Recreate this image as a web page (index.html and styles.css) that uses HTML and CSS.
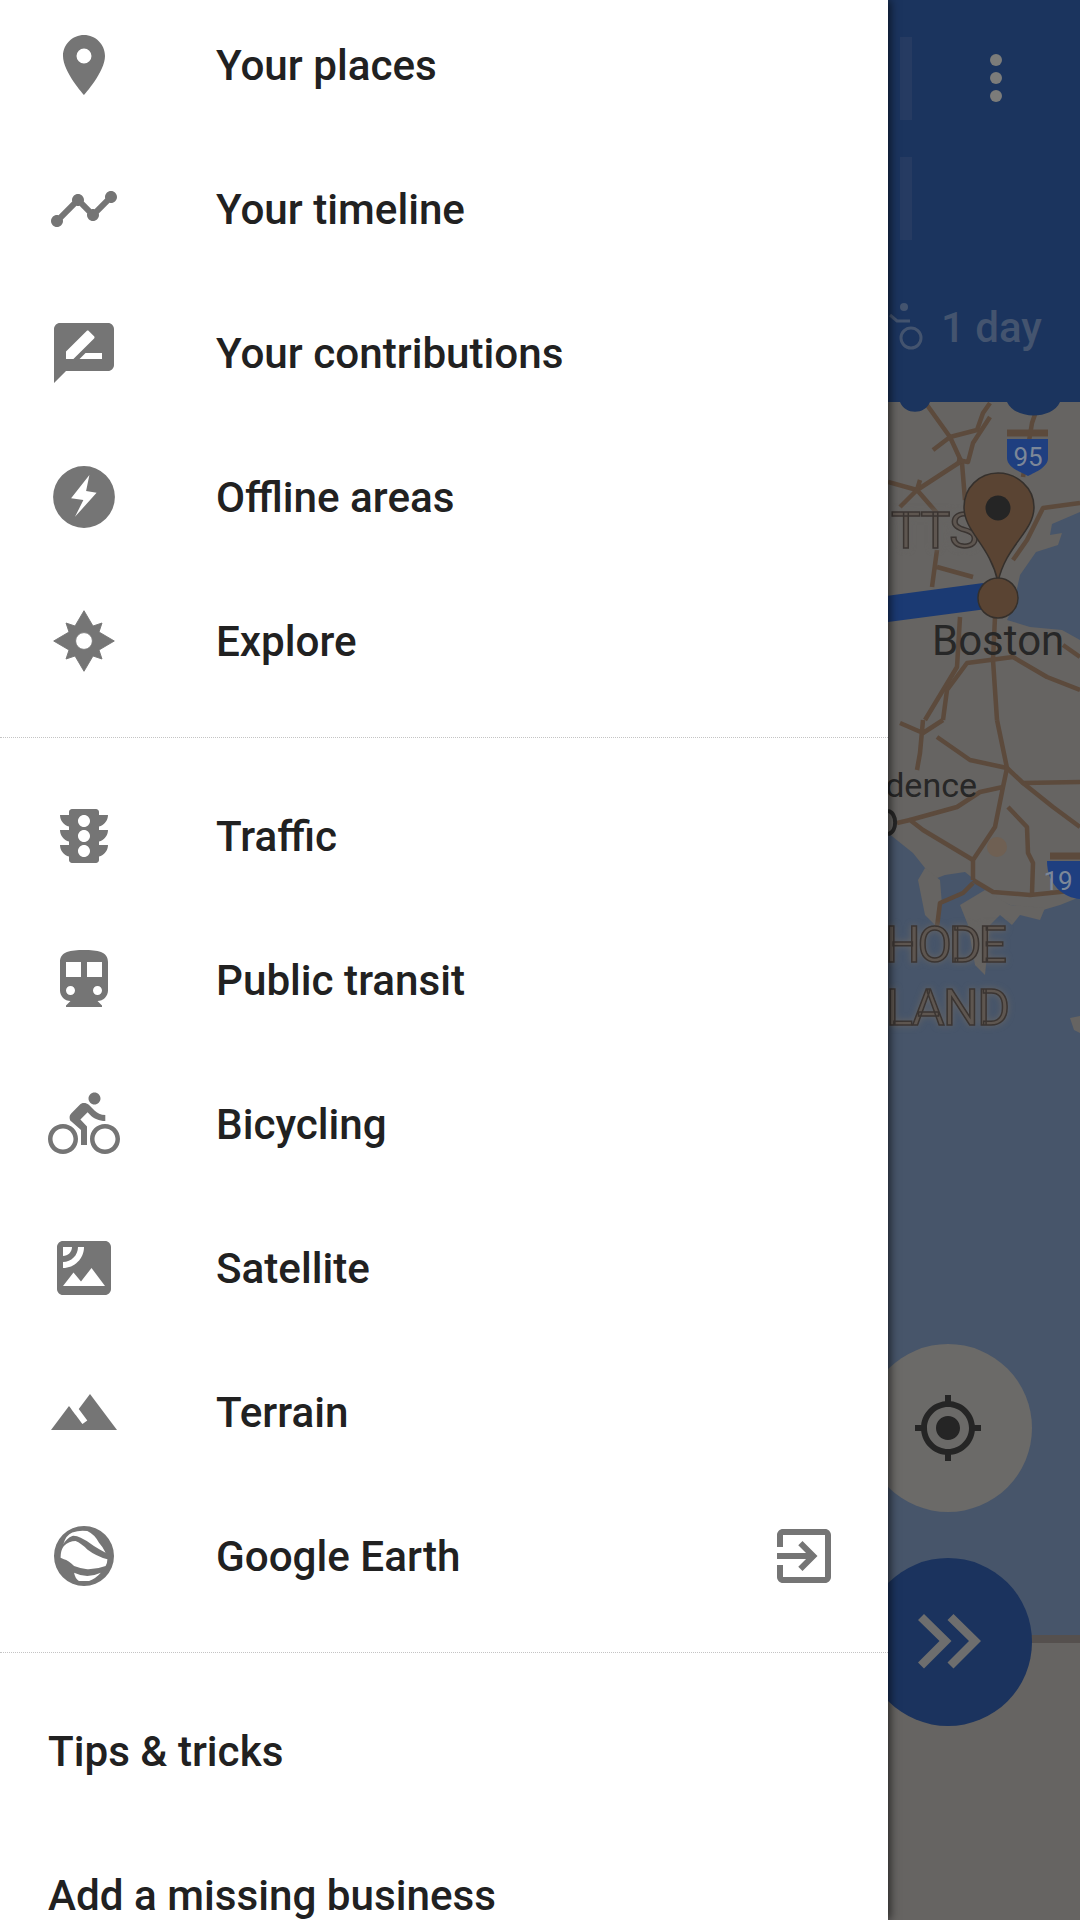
FILE: index.html
```html
<!DOCTYPE html>
<html>
  <head>
    <meta charset="utf-8" />
    <title>Maps menu</title>

    <link rel="stylesheet" href="styles.css">
  </head>

  <body>
    <div class="screen">
      <!-- the dimmed map behind the drawer -->
      <svg class="map" viewBox="888 0 192 1920" width="192" height="1920">
        <rect class="land" x="888" y="400" width="192" height="1250" />

        <path class="water" d="M1080 512L1052 524 1050 535 1062 533 1058 545 1036 552 1020 575 1013 607 1007 620 1030 627 1062 630 1080 640Z" />
        <path class="water" d="M888 833L913 853 925 868 932 880 945 875 965 872 975 880 993 897 1010 905 1043 910 1060 905 1080 897V1660H888Z" />
        <path class="land" d="M1070 1018L1080 1016V1033L1074 1030Z" />
        <path class="land" d="M925 868L940 880 942 905 935 925 925 915 918 880ZM960 905L985 890 1010 905 1045 908 1040 920 1020 915 1012 925 1000 915 990 925 985 975 975 965 968 925Z" />
        <circle class="park" cx="997" cy="847" r="10" />

        <g class="roads">
          <path d="M927 405L950 437 962 463 965 500" />
          <path d="M990 403L983 413 977 430 950 437 933 450" />
          <path d="M990 417L973 443 968 462 957 460" />
          <path d="M888 482L917 490 960 462" />
          <path d="M917 490L900 507M920 480L917 490 937 513" />
          <path d="M1040 400L1032 423 1023 477" />
          <path d="M1080 503L1043 508 1027 540 1013 560" />
          <path d="M937 550L932 587M937 567L973 577" />
          <path d="M960 617L957 667 925 720" />
          <path d="M995 617L993 660 997 720" />
          <path d="M943 720L947 690 967 663 1013 657 1047 677 1080 690" />
          <path d="M1063 645L1080 657" />
          <path d="M923 720L920 753 917 770M900 723L923 733 943 720" />
          <path d="M937 737L970 760 1007 768 1023 783 1080 782" />
          <path d="M997 720L1007 768 1003 787 995 827 973 860 973 880" />
          <path d="M1008 807L1027 827 1028 853 1033 863 1032 893" />
          <path d="M1023 783L1053 807 1080 827" />
          <path d="M910 820L957 807 980 792 1003 787" />
          <path d="M897 823L910 820 923 830 973 860" />
          <path d="M973 880L993 892 1030 895 1080 890" />
          <path d="M973 883L963 893 940 903 937 927" />
        </g>
        <path class="route" d="M880 610L985 596" />

        <path class="shield-top" d="M1007 433H1048" />
        <path class="shield" d="M1007 439H1048V458C1048 467 1036 472 1028 476 1020 472 1007 467 1007 458Z" />
        <text class="shield-num" x="1028" y="466">95</text>
        <path class="shield-top" d="M1050 856H1080" />
        <path class="shield" d="M1047 861H1080V899C1064 898 1047 885 1047 861Z" />
        <text class="shield-num" x="1058" y="890">19</text>

        <text class="state" x="891" y="548" textLength="88">TTS</text>
        <text class="state" x="885" y="962" textLength="122">HODE</text>
        <text class="state" x="886" y="1025" textLength="124">LAND</text>

        <path class="pin" d="M998 473C979 473 964 488 964 507 964 532 990 545 998 582 1006 545 1034 532 1034 507 1034 488 1017 473 998 473Z" />
        <circle class="pin" cx="998" cy="598" r="20" />
        <circle class="pin-dot" cx="998" cy="508" r="12.5" />

        <text class="city" x="932" y="655">Boston</text>
        <text class="town" x="977" y="797" text-anchor="end">dence</text>
        <path class="town-arc" d="M888 811C897 812 898 832 888 834" />

        <!-- app bar -->
        <path class="bar" d="M888 0H1080V402H888Z" />
        <path class="bar" d="M900 402H930C925 415 905 415 900 402ZM1007 402H1060C1052 420 1015 420 1007 402Z" />
        <rect class="bar-ghost" x="900" y="37" width="12" height="83" />
        <rect class="bar-ghost" x="900" y="157" width="12" height="83" />
        <circle class="bar-dot" cx="996" cy="60" r="6" />
        <circle class="bar-dot" cx="996" cy="78" r="6" />
        <circle class="bar-dot" cx="996" cy="96" r="6" />
        <g class="bar-bike">
          <circle class="bar-bike-head" cx="904" cy="307" r="4" />
          <path d="M890 315L897 321H910" />
          <circle cx="911" cy="338" r="10" />
        </g>
        <text class="bar-label" x="941" y="342">1 day</text>

        <rect class="land" x="888" y="1643" width="192" height="277" />
        <path class="shore" d="M1030 1639H1080" />

        <circle class="fab-light" cx="948" cy="1428" r="84" />
        <path class="fab-glyph" transform="translate(912 1392) scale(3)" d="M12 8c-2.21 0-4 1.79-4 4s1.79 4 4 4 4-1.79 4-4-1.79-4-4-4zm8.94 3c-.46-4.17-3.77-7.48-7.94-7.94V1h-2v2.06C6.83 3.52 3.52 6.83 3.06 11H1v2h2.06c.46 4.17 3.77 7.48 7.94 7.94V23h2v-2.06c4.17-.46 7.48-3.77 7.94-7.94H23v-2h-2.06zM12 19c-3.87 0-7-3.13-7-7s3.13-7 7-7 7 3.13 7 7-3.13 7-7 7z" />
        <circle class="fab-dark" cx="948" cy="1642" r="84" />
        <path class="fab-chevrons" d="M918 1620L924 1614 951.500 1641 924 1668.500 918 1662.500 939.500 1641ZM947.500 1620L953.500 1614 981 1641 953.500 1668.500 947.500 1662.500 969 1641Z" />
      </svg>

      <nav class="drawer">
        <div class="group group--first">
          <a class="row">
            <svg class="icon" viewBox="0 0 24 24"><path d="M12 2C8.130 2 5 5.130 5 9c0 5.250 7 13 7 13s7-7.750 7-13c0-3.870-3.130-7-7-7zm0 9.500a2.500 2.500 0 0 1 0-5 2.500 2.500 0 0 1 0 5z" /></svg>
            <span>Your places</span>
          </a>
          <a class="row">
            <svg class="icon" viewBox="0 0 24 24"><path d="M23 8c0 1.100-.9 2-2 2-.18 0-.35-.02-.51-.07l-3.560 3.550c.05.16.07.34.07.52 0 1.100-.9 2-2 2s-2-.9-2-2c0-.18.02-.36.07-.52l-2.550-2.550c-.16.05-.34.07-.52.07s-.36-.02-.52-.07l-4.550 4.560c.05.16.07.33.07.51 0 1.100-.9 2-2 2s-2-.9-2-2 .9-2 2-2c.18 0 .35.02.51.07l4.560-4.550C8.020 9.360 8 9.180 8 9c0-1.100.9-2 2-2s2 .9 2 2c0 .18-.02.36-.07.52l2.550 2.550c.16-.05.34-.07.52-.07s.36.02.52.07l3.550-3.560C19.020 8.350 19 8.180 19 8c0-1.100.9-2 2-2s2 .9 2 2z" /></svg>
            <span>Your timeline</span>
          </a>
          <a class="row">
            <svg class="icon" viewBox="0 0 24 24"><path fill-rule="evenodd" d="M20 2H4c-1.100 0-2 .9-2 2v18l4-4h14c1.100 0 2-.9 2-2V4c0-1.100-.9-2-2-2zM6 14v-2.470l6.880-6.880c.2-.2.51-.2.71 0l1.770 1.770c.2.2.2.51 0 .71L8.470 14H6zm12 0h-7.500l2-2H18v2z" /></svg>
            <span>Your contributions</span>
          </a>
          <a class="row">
            <svg class="icon" viewBox="0 0 24 24"><path fill-rule="evenodd" d="M12 1.700a10.300 10.300 0 1 0 0 20.600 10.300 10.300 0 0 0 0-20.600zM13.800 4.700L7.700 12.400 11.800 13 9 18.600 16.200 10.600 12.700 10z" /></svg>
            <span>Offline areas</span>
          </a>
          <a class="row">
            <svg class="icon" viewBox="0 0 24 24"><path class="icon-star" fill-rule="evenodd" d="M12 1.900L9 7 6 6 7 9 1.900 12 7 15 6 18 9 17 12 22.100 15 17 18 18 17 15 22.100 12 17 9 18 6 15 7ZM12 9.200a2.800 2.800 0 1 0 0 5.600 2.800 2.800 0 0 0 0-5.600z" /></svg>
            <span>Explore</span>
          </a>
        </div>

        <div class="group">
          <a class="row">
            <svg class="icon" viewBox="0 0 24 24"><path d="M20 10h-3V8.860c1.720-.45 3-2 3-3.860h-3V4c0-.55-.45-1-1-1H8c-.55 0-1 .45-1 1v1H4c0 1.860 1.280 3.410 3 3.860V10H4c0 1.860 1.280 3.410 3 3.860V15H4c0 1.860 1.280 3.410 3 3.860V20c0 .55.45 1 1 1h8c.55 0 1-.45 1-1v-1.140c1.720-.45 3-2 3-3.860h-3v-1.140c1.720-.45 3-2 3-3.860zm-8 9c-1.110 0-2-.9-2-2s.89-2 2-2c1.100 0 2 .9 2 2s-.89 2-2 2zm0-5c-1.110 0-2-.9-2-2s.89-2 2-2c1.100 0 2 .9 2 2s-.89 2-2 2zm0-5c-1.110 0-2-.9-2-2 0-1.110.89-2 2-2 1.100 0 2 .89 2 2 0 1.100-.89 2-2 2z" /></svg>
            <span>Traffic</span>
          </a>
          <a class="row">
            <svg class="icon" viewBox="0 0 24 24"><path d="M12 2c-4.420 0-8 .5-8 4v9.500C4 17.430 5.570 19 7.500 19L6 20.500v.5h12v-.5L16.500 19c1.930 0 3.500-1.570 3.500-3.500V6c0-3.500-3.580-4-8-4zM7.500 17c-.83 0-1.500-.67-1.500-1.500S6.670 14 7.500 14s1.500.67 1.500 1.500S8.330 17 7.500 17zm3.500-6H6V6h5v5zm5.500 6c-.83 0-1.500-.67-1.500-1.500s.67-1.500 1.500-1.500 1.500.67 1.500 1.500-.67 1.500-1.500 1.500zm1.500-6h-5V6h5v5z" /></svg>
            <span>Public transit</span>
          </a>
          <a class="row">
            <svg class="icon" viewBox="0 0 24 24"><path d="M15.500 5.500c1.100 0 2-.9 2-2s-.9-2-2-2-2 .9-2 2 .9 2 2 2zM5 12c-2.800 0-5 2.200-5 5s2.200 5 5 5 5-2.200 5-5-2.200-5-5-5zm0 8.500c-1.900 0-3.500-1.600-3.500-3.500s1.600-3.500 3.500-3.500 3.500 1.600 3.500 3.500-1.600 3.500-3.500 3.500zm5.800-10l2.400-2.400.8.8c1.300 1.300 3 2.100 5.100 2.100V9c-1.500 0-2.700-.6-3.600-1.500l-1.900-1.900c-.5-.4-1-.6-1.600-.6s-1.100.2-1.400.6L7.800 8.400c-.4.4-.6.9-.6 1.400 0 .6.2 1.100.6 1.400L11 14v5h2v-6.200l-2.200-2.300zM19 12c-2.800 0-5 2.200-5 5s2.200 5 5 5 5-2.200 5-5-2.200-5-5-5zm0 8.500c-1.900 0-3.500-1.600-3.500-3.500s1.600-3.500 3.500-3.500 3.500 1.600 3.500 3.500-1.600 3.500-3.500 3.500z" /></svg>
            <span>Bicycling</span>
          </a>
          <a class="row">
            <svg class="icon" viewBox="0 0 24 24"><path d="M19 3H5c-1.100 0-2 .9-2 2v14c0 1.100.9 2 2 2h14c1.100 0 2-.9 2-2V5c0-1.100-.9-2-2-2zM5 4.990h3C8 6.650 6.650 8 5 8V4.990zM5 12v-2c2.760 0 5-2.250 5-5.010h2C12 8.860 8.870 12 5 12zm0 6l3.500-4.500 2.500 3.010L14.500 12l4.500 6H5z" /></svg>
            <span>Satellite</span>
          </a>
          <a class="row">
            <svg class="icon" viewBox="0 0 24 24"><path d="M14 6l-3.750 5 2.850 3.800-1.600 1.200C9.810 13.750 7 10 7 10l-6 8h22L14 6z" /></svg>
            <span>Terrain</span>
          </a>
          <a class="row">
            <svg class="icon" viewBox="0 0 24 24"><path fill-rule="evenodd" d="M12 2a10 10 0 1 0 0 20 10 10 0 0 0 0-20zM5.100 8.100Q6 5 8.100 4.200 10.500 3.300 13.100 3.700 15.500 4.800 17 7.600 18.300 9 19.200 10.900 17 9.800 15.300 8.700 13 6.800 10.900 5.900 9.500 5.200 8.100 5.300 6.200 6 5.100 8.100zM4.200 12.600Q4.200 10 5.300 8.700 7 7 9.200 7 11 7.700 13.100 9.800 16 12 19.800 13.100 19.800 14.300 19.200 15.300 16 16.500 13.100 16.400 11 16.200 8.700 15.300 6.800 13.500 5.300 13.100zM8.700 17.600Q11 18.700 13.100 18.700 15.500 18.600 17.600 17.600 16 19.500 13.700 20.300H10.300Q9 19.500 8.700 17.600z" /></svg>
            <span>Google Earth</span>
            <svg class="icon row-end" viewBox="0 0 24 24"><path d="M10.090 15.590L11.500 17l5-5-5-5-1.410 1.410L12.670 11H3v2h9.670l-2.580 2.590zM19 3H5c-1.110 0-2 .9-2 2v4h2V5h14v14H5v-4H3v4c0 1.100.89 2 2 2h14c1.100 0 2-.9 2-2V5c0-1.100-.9-2-2-2z" /></svg>
          </a>
        </div>

        <div class="group">
          <a class="row"><span>Tips &amp; tricks</span></a>
          <a class="row"><span>Add a missing business</span></a>
        </div>
      </nav>
    </div>
  </body>
</html>
```

FILE: styles.css
```css
:root {
  font-family: Roboto, "Noto Sans", sans-serif;
}

body {
  margin: 0;
}

.screen {
  position: relative;
  width: 1080px;
  height: 1920px;
  overflow: hidden;
  background-color: #666462;
}

/* drawer */

.drawer {
  display: flow-root;
  position: relative;
  width: 888px;
  height: 1920px;
  background-color: #fff;
  box-shadow: 2px 0 9px rgba(0, 0, 0, 0.65);
}

.group {
  padding: 26px 0 24px;
  border-top: 1px dotted #c4c4c4;
}

.group--first {
  margin-top: -7px;
  padding-top: 0;
  border-top: 0;
}

.row {
  display: flex;
  align-items: center;
  height: 144px;
  padding: 0 48px;
  font-size: 42.2px;
  font-weight: 500;
  color: #212121;
}

.icon {
  flex: none;
  width: 72px;
  height: 72px;
  margin-right: 96px;
  fill: #757575;
}

.icon-star {
  stroke: #757575;
  stroke-width: 0.3;
  stroke-linejoin: round;
}

.row-end {
  margin-left: auto;
  margin-right: 0;
}

/* map */

.map {
  position: absolute;
  top: 0;
  right: 0;
}

.land {
  fill: #666462;
}

.water {
  fill: #47556a;
}

.park {
  fill: #6f6053;
}

.roads {
  fill: none;
  stroke: #5c4a3c;
  stroke-width: 4.500;
  stroke-linejoin: round;
}

.route {
  fill: none;
  stroke: #1b3a73;
  stroke-width: 26;
}

.shield {
  fill: #1f3f80;
}

.shield-top {
  stroke: #5c4a3c;
  stroke-width: 7;
}

.shield-num {
  font-size: 26px;
  text-anchor: middle;
  fill: #7c8798;
}

.state {
  font-size: 50px;
  fill: #5e5650;
  stroke: #3b3532;
  stroke-width: 1.500;
  filter: drop-shadow(0 0 3px #666462);
}

.pin {
  fill: #5a4433;
  stroke: #35302c;
  stroke-width: 1.500;
}

.pin-dot {
  fill: #252525;
}

.city,
.town {
  fill: #272727;
}

.city {
  font-size: 42px;
}

.town {
  font-size: 34px;
}

.town-arc {
  fill: none;
  stroke: #272727;
  stroke-width: 4;
}

.shore {
  stroke: #55504e;
  stroke-width: 8;
}

.bar {
  fill: #1b345e;
}

.bar-ghost {
  fill: #263b62;
}

.bar-dot {
  fill: #7c7c7a;
}

.bar-bike {
  fill: none;
  stroke: #44546f;
  stroke-width: 3;
}

.bar-bike-head {
  fill: #44546f;
  stroke: none;
}

.bar-label {
  font-size: 42px;
  font-weight: 500;
  fill: #44546f;
}

.fab-light {
  fill: #6b6a68;
}

.fab-glyph {
  fill: #252525;
}

.fab-dark {
  fill: #1b335e;
}

.fab-chevrons {
  fill: #6e6e6e;
}
```
